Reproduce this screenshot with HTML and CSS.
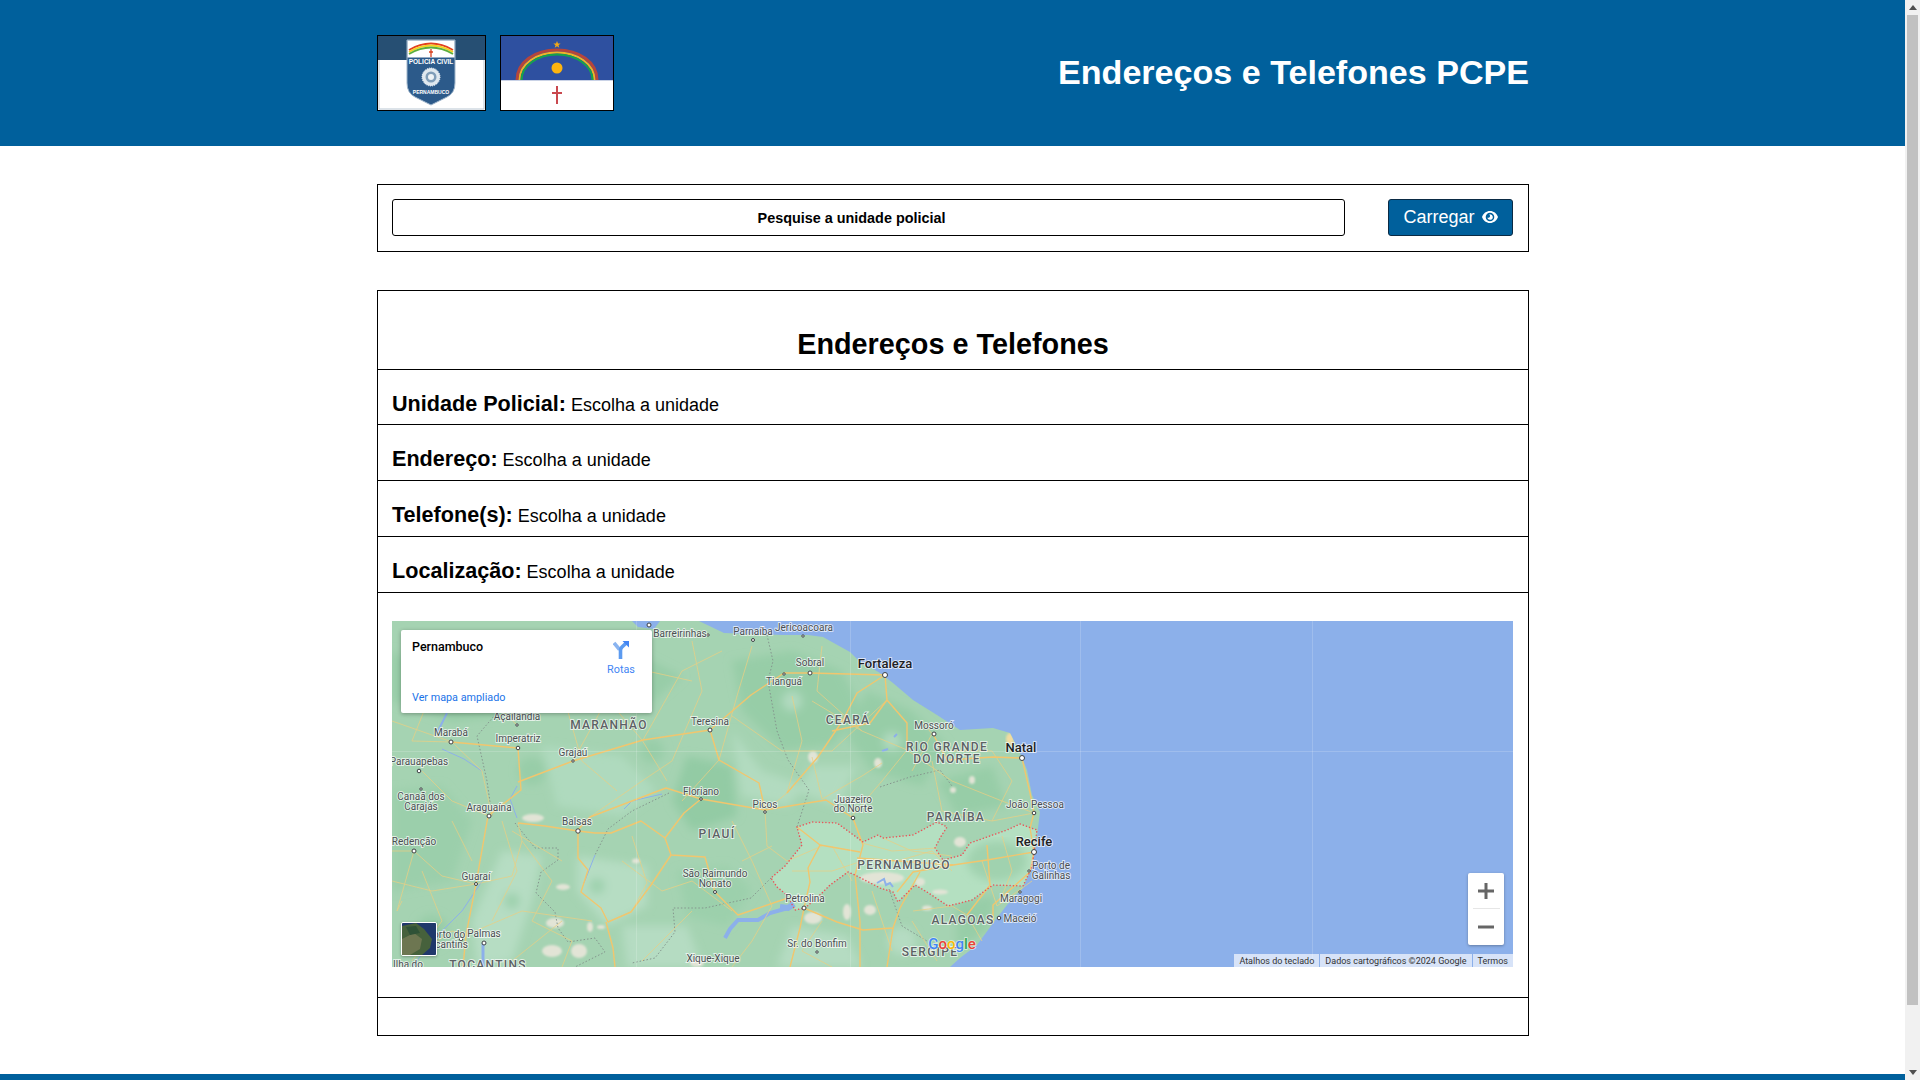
FILE: index.html
```html
<!DOCTYPE html>
<html lang="pt-BR">
<head>
  <meta charset="utf-8">
  <title>Endereços e Telefones PCPE</title>
  <link rel="stylesheet" href="styles.css">
</head>
<body>
<div class="page">
  <div class="content">

    <header class="top">
      <div class="container top-inner">
        <div class="logos">
          <svg class="logo logo-pc" viewBox="0 0 107 74">
            <rect width="107" height="74" fill="#fff"/>
            <rect x="1" y="1" width="105" height="72" fill="none" stroke="#b9c6d2"/>
            <rect width="107" height="24" fill="#264f73"/>
            <path d="M29 4h48v43q0 10-8 14l-16 8-16-8q-8-4-8-14z" fill="#2c5a8a" stroke="#9fb6cb" stroke-width="1"/>
            <path d="M29.500 4.500h47v17h-47z" fill="#fff"/>
            <path d="M31 14q22-13 44 0" fill="none" stroke="#e2411f" stroke-width="1.800"/>
            <path d="M31 16q22-13 44 0" fill="none" stroke="#f4d21f" stroke-width="1.800"/>
            <path d="M31 18q22-13 44 0" fill="none" stroke="#5cae3c" stroke-width="1.800"/>
            <path d="M53 13v8M51 16h4" stroke="#d8401f" stroke-width="1.300"/>
            <text class="logo-t" x="53" y="28">POLICIA CIVIL</text>
            <circle cx="53" cy="41" r="9" fill="#dfe8ef" stroke="#fff" stroke-width="1" stroke-dasharray="1 1"/>
            <circle cx="53" cy="41" r="5.500" fill="#7f9db8"/>
            <circle cx="53" cy="41" r="3" fill="#eef3f6"/>
            <text class="logo-t logo-t-sm" x="53" y="58">PERNAMBUCO</text>
          </svg>
          <svg class="logo logo-pe" viewBox="0 0 112 74">
            <rect width="112" height="74" fill="#fff"/>
            <rect width="112" height="44" fill="#2e50a0"/>
            <rect y="44" width="112" height="1" fill="#c9d2e6"/>
            <path d="M16 44c0-18 18-30 40-30s40 12 40 30" fill="none" stroke="#b5453c" stroke-width="3"/>
            <path d="M18.500 44c0-16 17-27.500 37.500-27.500S93.500 28 93.500 44" fill="none" stroke="#f0b428" stroke-width="2"/>
            <path d="M20.500 44c0-14 16-25.500 35.500-25.500S91.500 30 91.500 44" fill="none" stroke="#16a34a" stroke-width="2"/>
            <circle cx="56" cy="32" r="5.500" fill="#fdb40f"/>
            <path d="M56 5l1 2.600h2.600l-2.100 1.600.8 2.600-2.300-1.600-2.300 1.600.8-2.600-2.100-1.600h2.600z" fill="#f0a818"/>
            <path d="M56 50v18M51 57h10" stroke="#c9484e" stroke-width="2"/>
          </svg>
        </div>
        <h1 class="top-title">Endereços e Telefones PCPE</h1>
      </div>
    </header>

    <main class="container main">
      <form class="card search" onsubmit="return false">
        <input class="search-input" type="text" placeholder="Pesquise a unidade policial">
        <button class="btn" type="button">
          Carregar
          <svg class="btn-eye" viewBox="0 0 16 12">
            <path fill-rule="evenodd" d="M8 0c3.600 0 6.700 2.300 8 6-1.300 3.700-4.400 6-8 6S1.300 9.700 0 6c1.300-3.700 4.400-6 8-6zm0 1.700a4.300 4.300 0 1 0 0 8.600 4.300 4.300 0 0 0 0-8.600z" fill="#fff"/>
            <path d="M8 3.200a2.800 2.800 0 1 1-2.700 3.500c1 .4 2.500-.2 2.700-1.300.1-.8-.2-1.500-.7-2.100.2 0 .5-.1.700-.1z" fill="#fff"/>
          </svg>
        </button>
      </form>

      <section class="card info">
        <h2 class="info-title">Endereços e Telefones</h2>
        <p class="info-row"><b>Unidade Policial:</b> Escolha a unidade</p>
        <p class="info-row"><b>Endereço:</b> Escolha a unidade</p>
        <p class="info-row"><b>Telefone(s):</b> Escolha a unidade</p>
        <p class="info-row"><b>Localização:</b> Escolha a unidade</p>

        <div class="map-row">
          <div class="map">
            <svg class="map-art" viewBox="0 0 1121 346">
              <defs>
                <filter id="soft" x="-10%" y="-10%" width="120%" height="120%"><feGaussianBlur stdDeviation="4"/></filter>
                <filter id="blur1"><feGaussianBlur stdDeviation="1"/></filter>
                <filter id="softer"><feGaussianBlur stdDeviation=".35"/></filter>
                <clipPath id="land-clip"><path d="M0 0H307L332 12 390 14 416 14 431 16 458 31 466 39 488 52 501 62 521 79 545 94 568 109 601 107 618 112 628 132 635 149 640 174 648 191 646 207 645 217 643 231 638 251 631 267 615 284 601 302 585 324 568 337 558 346H0z"/></clipPath>
                <path id="pe-line" d="M405 206L420 201 445 202 471 221 486 214 491 217 521 214 545 201 555 206 548 217 543 227 551 239 570 234 578 222 615 209 628 203 645 209 643 224 640 246 631 265 601 264 580 279 556 285 535 271 523 264 506 281 501 271 488 267 463 254 456 251 438 264 430 272 413 287 403 289 395 274 385 266 379 257 393 245 410 224z"/>
              </defs>
              <rect width="1121" height="346" fill="#8cb0ea"/>

              <!-- terra -->
              <path d="M0 0H307L332 12 390 14 416 14 431 16 458 31 466 39 488 52 501 62 521 79 545 94 568 109 601 107 618 112 628 132 635 149 640 174 648 191 646 207 645 217 643 231 638 251 631 267 615 284 601 302 585 324 568 337 558 346H0z" fill="#a5d3b2"/>

              <g clip-path="url(#land-clip)">
                <g filter="url(#soft)">
                  <path d="M0 30L60 60 120 50 110 95 60 100 0 80z" fill="#96cca6"/>
                  <path d="M140 20L240 30 290 55 250 90 180 70z" fill="#98cda8"/>
                  <path d="M340 40L400 30 450 50 470 90 440 125 390 130 350 90z" fill="#97cda7"/>
                  <path d="M475 70L520 90 555 125 530 165 480 150 455 115z" fill="#97cda7"/>
                  <path d="M0 170L50 165 80 200 60 260 0 270z" fill="#9bcfab"/>
                  <path d="M110 230L150 235 140 280 120 340 85 346 80 300z" fill="#b6ddc3"/>
                  <path d="M150 125L230 135 265 170 230 195 165 185z" fill="#afdabe"/>
                  <path d="M185 235L255 245 255 285 215 305 185 270z" fill="#b6ddc3"/>
                  <path d="M295 135L340 145 345 195 300 210 280 180z" fill="#93cba4"/>
                  <path d="M340 110L370 150 415 165 395 185 350 175z" fill="#b2dbc0"/>
                  <path d="M285 250L335 245 360 270 335 305 295 295z" fill="#9cd0ac"/>
                  <path d="M420 145L465 145 445 185 405 170z" fill="#b2dbc0"/>
                  <path d="M230 305L295 305 310 346H235z" fill="#b5dcc2"/>
                  <path d="M545 160L600 145 615 185 565 195z" fill="#97cda7"/>
                  <path d="M565 280L605 275 595 310 565 328z" fill="#97cda7"/>
                  <path d="M400 305L455 315 470 346H385z" fill="#b5dcc2"/>
                  <circle cx="40" cy="310" r="16" fill="#98cda8"/>
                  <circle cx="260" cy="130" r="12" fill="#98cda8"/>
                  <circle cx="140" cy="150" r="14" fill="#98cda8"/>
                  <circle cx="510" cy="320" r="14" fill="#b5dcc2"/>
                  <circle cx="205" cy="265" r="8" fill="#9ed1ae"/>
                  <circle cx="120" cy="280" r="8" fill="#9ed1ae"/>
                  <circle cx="240" cy="60" r="9" fill="#b1dabf"/>
                  <circle cx="80" cy="60" r="9" fill="#b1dabf"/>
                  <circle cx="400" cy="80" r="10" fill="#b1dabf"/>
                  <circle cx="500" cy="120" r="9" fill="#b1dabf"/>
                </g>

                <!-- Pernambuco -->
                <use href="#pe-line" fill="#b4e0c1" filter="url(#softer)"/>
                <ellipse cx="605" cy="240" rx="30" ry="20" fill="#a0d2af" filter="url(#soft)"/>

                <!-- manchas claras -->
                <g fill="#e2e4d6" filter="url(#blur1)">
                  <ellipse cx="141" cy="197" rx="11" ry="4"/>
                  <ellipse cx="244" cy="240" rx="4" ry="2.500"/>
                  <ellipse cx="171" cy="266" rx="7" ry="3"/>
                  <ellipse cx="163" cy="302" rx="9" ry="5"/>
                  <ellipse cx="198" cy="306" rx="3" ry="5"/>
                  <ellipse cx="209" cy="306" rx="4" ry="2"/>
                  <ellipse cx="160" cy="330" rx="10" ry="6"/>
                  <ellipse cx="187" cy="330" rx="8" ry="7"/>
                  <ellipse cx="421" cy="297" rx="9" ry="6"/>
                  <ellipse cx="478" cy="289" rx="6" ry="5"/>
                  <ellipse cx="455" cy="291" rx="4" ry="8"/>
                  <ellipse cx="568" cy="221" rx="6" ry="5"/>
                  <ellipse cx="548" cy="271" rx="8" ry="2.500"/>
                  <ellipse cx="535" cy="287" rx="5" ry="2.500"/>
                  <ellipse cx="421" cy="136" rx="5" ry="6"/>
                  <ellipse cx="486" cy="142" rx="4" ry="5"/>
                  <ellipse cx="580" cy="159" rx="3" ry="4"/>
                  <ellipse cx="561" cy="169" rx="3" ry="3"/>
                  <ellipse cx="305" cy="342" rx="7" ry="4"/>
                  <ellipse cx="490" cy="257" rx="22" ry="6"/>
                  <ellipse cx="528" cy="261" rx="5" ry="4"/>
                </g>
                <ellipse cx="618" cy="118" rx="4" ry="6" fill="#f1dca0" filter="url(#blur1)"/>
              </g>

              <!-- rios e lagos -->
              <g fill="none" stroke="#8cb0ea" filter="url(#softer)">
                <path d="M333 317L338 308 346 299 366 299 378 292 396 287" stroke-width="4"/>
                <path d="M388 286L396 287 402 283" stroke-width="6"/>
                <path d="M485 262L492 258 494 264 498 262 501 266" stroke-width="2"/>
                <path d="M270 173L240 180 232 188" stroke-width="1"/>
                <path d="M125 197L118 178 125 165M90 260L70 290 40 320 20 346" stroke-width="1"/>
                <path d="M91 322V346" stroke-width="3"/>
                <path d="M203 234L192 262" stroke-width="1"/>
                <path d="M50 128L72 138 90 150" stroke-width="1"/>
                <path d="M490 130L496 128M505 113L502 116" stroke-width="2"/>
                <path d="M55 92L45 112" stroke-width="2"/>
                <path d="M240 0L268 0 262 8 246 6z" fill="#8cb0ea" stroke="none"/>
              </g>

              <!-- divisas estaduais -->
              <g fill="none" stroke="#84958d" stroke-width="1" stroke-dasharray="1.500 2">
                <path d="M123 202L143 227 166 227 166 239 149 251 144 272 163 291 166 307 176 321 203 317 213 331 183 346"/>
                <path d="M379 257L359 277 313 287 281 287 283 311 263 337 240 342"/>
                <path d="M277 172L240 190 216 208 203 234"/>
                <path d="M375 14L381 40 376 60 385 110 396 139 417 169 405 206"/>
                <path d="M488 166L518 156 548 149 560 165"/>
                <path d="M497 268L510 305 535 320"/>
                <path d="M155 10L130 30 115 80 85 115 95 160 100 195"/>
              </g>

              <!-- estradas secundarias -->
              <g fill="none" stroke="#e8cf84" stroke-width=".9" opacity=".85" filter="url(#softer)">
                <path d="M0 100L60 121 90 150 100 195M30 150L60 180 97 195"/>
                <path d="M0 230L22 230 50 255 84 263 120 255 130 220 126 202"/>
                <path d="M22 230L5 290 10 280M84 263L40 270 0 260"/>
                <path d="M74 314L130 290 200 300M120 340L170 300"/>
                <path d="M170 70L190 140 225 170M200 60L250 119"/>
                <path d="M250 119L275 160M251 119L290 50 330 30M125 60L210 40 300 60"/>
                <path d="M340 95L390 130 440 130 495 79M420 80L470 110 515 129"/>
                <path d="M515 129L490 160 460 195 470 222M515 129L560 160 610 180 642 192"/>
                <path d="M420 136L430 178 470 155 490 142M540 140L550 190 600 200 642 192"/>
                <path d="M400 75L410 120 395 172M373 190L395 172"/>
                <path d="M491 217L520 230 560 235M470 222L500 230 545 227"/>
                <path d="M430 225L395 240 375 225 373 190M590 240L605 285 640 260"/>
                <path d="M521 290L560 285 575 294 590 320M480 270L500 330"/>
                <path d="M240 215L255 262 240 290M300 290L250 340"/>
                <path d="M30 330L60 310 74 314M120 210L170 240"/>
                <path d="M10 20L40 70 20 120 60 121M70 20L95 75 125 104M250 20L225 60 181 140"/>
                <path d="M300 20L310 70 280 140 250 160 198 196M360 25L345 75 327 139 290 180"/>
                <path d="M430 25L425 70 470 110M560 130L600 130 620 160 600 200M530 100L540 113 520 150"/>
                <path d="M130 220L160 260 140 300 180 320 170 346M230 240L270 270 300 260 340 290"/>
                <path d="M30 250L50 300 20 340M110 200L125 250 100 300M60 200L80 240"/>
                <path d="M350 240L380 225M340 200L360 240 380 285 360 320 340 346"/>
                <path d="M430 300L410 330 440 346M520 300L545 340M560 250L540 230 505 240"/>
                <path d="M440 225L460 260M400 250L440 250 470 240M610 215L620 250 610 275"/>
              </g>

              <!-- estradas principais -->
              <g fill="none" stroke="#f1c66e" stroke-width="1.400" stroke-linejoin="round" filter="url(#softer)">
                <path d="M126 202L153 205 186 210 203 212 219 212 249 200 273 217 279 234 313 236 323 271 346 294 396 277"/>
                <path d="M279 234L259 264 239 291 216 301 209 287 189 271 196 249 186 237 186 210"/>
                <path d="M214 301L221 327 223 346"/>
                <path d="M96 195L84 263 74 314 71 346"/>
                <path d="M96 195L129 169 126 127 59 121"/>
                <path d="M126 161L181 140 251 119 318 109 359 74 392 52 418 52 493 54"/>
                <path d="M318 109L327 139 367 162 373 189 434 179 461 197"/>
                <path d="M309 178L274 167 198 196 186 209M309 178L292 192 273 217M309 178L373 189"/>
                <path d="M493 54L495 79 478 102 440 110M493 54L465 72 451 99 426 136 395 172"/>
                <path d="M495 79L515 102 515 129M541 113L555 139 601 136 630 137"/>
                <path d="M630 137L638 172 642 192 638 207 642 231"/>
                <path d="M642 231L595 239 561 244 521 251 505 271"/>
                <path d="M465 237L561 244M428 224L468 231M428 224L405 206M428 224L416 247 418 261 412 287"/>
                <path d="M461 197L471 224 463 254"/>
                <path d="M412 287L408 307 398 346M412 287L445 301 471 309 501 307 508 287 528 251"/>
                <path d="M463 254L468 301 468 346M501 307L495 346"/>
                <path d="M642 231L638 251 601 284 601 302M595 224L598 264 575 294"/>
              </g>

              <!-- linhas de grade -->
              <g stroke="#fff" stroke-opacity=".17" stroke-width="1">
                <path d="M458.500 0V346M688.500 0V346M920.500 0V346M0 130.500H1121M244.500 0V346"/>
              </g>

              <use href="#pe-line" fill="none" stroke="#e8565a" stroke-width="1.500" stroke-dasharray=".1 3.200" stroke-linecap="round"/>

              <!-- pontos -->
              <g class="dots">
                <circle cx="257" cy="4" r="2"/>
                <circle cx="493" cy="54" r="2.500"/>
                <circle cx="418" cy="52" r="2"/>
                <circle cx="392" cy="53" r="1.200"/>
                <circle cx="411" cy="15" r="1.200"/>
                <circle cx="361" cy="19" r="1.500"/>
                <circle cx="316" cy="14" r="1.200"/>
                <circle cx="542" cy="113" r="2"/>
                <circle cx="630" cy="137" r="2.500"/>
                <circle cx="642" cy="192" r="1.800"/>
                <circle cx="642" cy="231" r="2.500"/>
                <circle cx="637" cy="250" r="1.200"/>
                <circle cx="628" cy="271" r="1.200"/>
                <circle cx="607" cy="297" r="1.800"/>
                <circle cx="425" cy="331" r="1.200"/>
                <circle cx="461" cy="197" r="1.800"/>
                <circle cx="412" cy="287" r="2"/>
                <circle cx="373" cy="191" r="1.300"/>
                <circle cx="309" cy="178" r="1.300"/>
                <circle cx="323" cy="271" r="1.500"/>
                <circle cx="186" cy="210" r="2.200"/>
                <circle cx="318" cy="109" r="2"/>
                <circle cx="181" cy="140" r="1.200"/>
                <circle cx="125" cy="104" r="1.200"/>
                <circle cx="126" cy="127" r="1.800"/>
                <circle cx="59" cy="121" r="2"/>
                <circle cx="27" cy="150" r="1.800"/>
                <circle cx="29" cy="168" r="1.200"/>
                <circle cx="97" cy="195" r="2"/>
                <circle cx="22" cy="230" r="2"/>
                <circle cx="84" cy="263" r="1.500"/>
                <circle cx="92" cy="322" r="2"/>
                <circle cx="69" cy="318" r="1.800"/>
              </g>

              <!-- nomes -->
              <g class="lb">
                <text x="412" y="10">Jericoacoara</text>
                <text x="361" y="14">Parnaíba</text>
                <text x="288" y="16">Barreirinhas</text>
                <text x="418" y="45">Sobral</text>
                <text x="392" y="64">Tianguá</text>
                <text x="542" y="108">Mossoró</text>
                <text x="643" y="187">João Pessoa</text>
                <text x="659" y="248">Porto de</text>
                <text x="659" y="258">Galinhas</text>
                <text x="629" y="281">Maragogi</text>
                <text x="628" y="301">Maceió</text>
                <text x="425" y="326">Sr. do Bonfim</text>
                <text x="461" y="182">Juazeiro</text>
                <text x="461" y="191">do Norte</text>
                <text x="413" y="281">Petrolina</text>
                <text x="373" y="187">Picos</text>
                <text x="309" y="174">Floriano</text>
                <text x="323" y="256">São Raimundo</text>
                <text x="323" y="266">Nonato</text>
                <text x="321" y="341">Xique-Xique</text>
                <text x="185" y="204">Balsas</text>
                <text x="318" y="104">Teresina</text>
                <text x="181" y="135">Grajaú</text>
                <text x="125" y="99">Açailândia</text>
                <text x="126" y="121">Imperatriz</text>
                <text x="59" y="115">Marabá</text>
                <text x="27" y="144">Parauapebas</text>
                <text x="29" y="179">Canaã dos</text>
                <text x="29" y="189">Carajás</text>
                <text x="97" y="190">Araguaína</text>
                <text x="22" y="224">Redenção</text>
                <text x="84" y="259">Guaraí</text>
                <text x="92" y="316">Palmas</text>
                <text x="54" y="317">Porto do</text>
                <text x="54" y="327">Tocantins</text>
                <text x="16" y="347">Ilha do</text>
              </g>
              <g class="lb lb-city">
                <text x="493" y="47">Fortaleza</text>
                <text x="629" y="131">Natal</text>
                <text x="642" y="225">Recife</text>
              </g>
              <g class="lb lb-state">
                <text x="456" y="103">CEARÁ</text>
                <text x="555" y="130">RIO GRANDE</text>
                <text x="555" y="142">DO NORTE</text>
                <text x="564" y="200">PARAÍBA</text>
                <text x="571" y="303">ALAGOAS</text>
                <text x="538" y="335">SERGIPE</text>
                <text x="512" y="248">PERNAMBUCO</text>
                <text x="325" y="217">PIAUÍ</text>
                <text x="217" y="108">MARANHÃO</text>
                <text x="96" y="348">TOCANTINS</text>
              </g>
              <text class="gg" x="560" y="328"><tspan fill="#4285f4">G</tspan><tspan fill="#ea4335">o</tspan><tspan fill="#fbbc05">o</tspan><tspan fill="#4285f4">g</tspan><tspan fill="#34a853">l</tspan><tspan fill="#ea4335">e</tspan></text>
            </svg>

            <div class="map-card">
              <div class="map-card-top">
                <span class="map-card-name">Pernambuco</span>
                <a class="map-routes" href="#">
                  <svg class="map-routes-ico" viewBox="0 0 16 18">
                    <path d="M1 2l5.500 6.500" fill="none" stroke="#8ab4f0" stroke-width="3.600"/>
                    <path d="M7.500 18V9.500Q7.500 7.500 9 6l4-3.800" fill="none" stroke="#5c9bf0" stroke-width="3.600"/>
                    <path d="M9.500 0H16v6.500z" fill="#4285f4"/>
                  </svg>
                  Rotas
                </a>
              </div>
              <a class="map-link" href="#">Ver mapa ampliado</a>
            </div>

            <div class="map-thumb">
              <svg viewBox="0 0 34 32">
                <rect width="34" height="32" fill="#20386b"/>
                <path d="M0 3L14 0 22 6 30 16 28 25 20 32H0z" fill="#46613c"/>
                <path d="M0 16L12 10 20 16 18 26 8 32H0z" fill="#6d7651"/>
                <path d="M4 4L14 3 18 10 8 12z" fill="#2f5237"/>
              </svg>
            </div>

            <div class="map-zoom">
              <button class="map-zoom-btn" type="button">
                <svg viewBox="0 0 16 16"><path d="M6.500 0h3v6.500H16v3H9.500V16h-3V9.500H0v-3h6.500z" fill="#666"/></svg>
              </button>
              <span class="map-zoom-sep"></span>
              <button class="map-zoom-btn" type="button">
                <svg viewBox="0 0 16 16"><path d="M0 6.500h16v3H0z" fill="#666"/></svg>
              </button>
            </div>

            <div class="map-attr">
              <span>Atalhos do teclado</span>
              <span>Dados cartográficos ©2024 Google</span>
              <span>Termos</span>
            </div>
          </div>
        </div>

        <div class="info-foot"></div>
      </section>
    </main>

    <footer class="bottom"></footer>
  </div>

  <div class="scrollbar">
    <span class="scroll-arrow scroll-up"></span>
    <span class="scroll-thumb"></span>
    <span class="scroll-arrow scroll-down"></span>
  </div>
</div>
</body>
</html>
```

FILE: styles.css
```css
* {
  box-sizing: border-box;
}
body {
  margin: 0;
  font-family: "Liberation Sans", Arial, sans-serif;
  color: #000;
  background-color: #fff;
}
.page {
  display: flex;
  height: 100vh;
  overflow: hidden;
}
.content {
  flex: 1;
  min-width: 0;
}
.container {
  width: 1152px;
  margin: 0 376px 0 377px;
}

/* Topo */
.top {
  height: 146px;
  background-color: #00609c;
}
.top-inner {
  display: flex;
  align-items: center;
  justify-content: space-between;
  height: 100%;
}
.logos {
  display: flex;
  gap: 14px;
}
.logo {
  display: block;
  height: 76px;
  border: 1.5px solid #000;
}
.logo-pc {
  width: 109px;
}
.logo-pe {
  width: 114px;
}
.logo-t {
  font-family: "Liberation Sans", sans-serif;
  font-size: 6.500px;
  font-weight: 700;
  fill: #fff;
  text-anchor: middle;
}
.logo-t-sm {
  font-size: 5px;
}
.top-title {
  margin: 0 0 2px;
  font-size: 34.100px;
  color: #fff;
}

/* Conteudo */
.main {
  display: flex;
  flex-direction: column;
  gap: 38px;
  padding: 38px 0;
}
.card {
  border: 1px solid #000;
}
.search {
  display: flex;
  align-items: flex-start;
  justify-content: space-between;
  height: 68px;
  padding: 14px 15px 0 14px;
}
.search-input {
  width: 953px;
  height: 37px;
  padding: 0 34px 0 0;
  border: 1px solid #000;
  border-radius: 3px;
  font-family: inherit;
  font-size: 14.400px;
  font-weight: 700;
  text-align: center;
  background-color: #fff;
}
.search-input::placeholder {
  color: #000;
  opacity: 1;
}
.btn {
  display: flex;
  align-items: center;
  justify-content: center;
  gap: 7px;
  width: 125px;
  height: 37px;
  padding: 0;
  border: 1px solid #0a2a44;
  border-radius: 3px;
  background-color: #00609c;
  color: #fff;
  font-family: inherit;
  font-size: 18px;
}
.btn-eye {
  width: 16px;
  height: 12px;
  margin-bottom: 2px;
}
.info-title {
  height: 79px;
  margin: 0;
  padding-top: 37px;
  border-bottom: 1px solid #000;
  font-size: 28.800px;
  line-height: 33px;
  text-align: center;
}
.info-row {
  height: 56px;
  margin: 0;
  padding: 21px 14px 0;
  border-bottom: 1px solid #000;
  font-size: 18px;
  line-height: 26px;
}
.info-title + .info-row {
  height: 55px;
}
.info-row b {
  font-size: 21.600px;
}
.map-row {
  padding: 28px 15px 30px 14px;
  border-bottom: 1px solid #000;
}
.info-foot {
  height: 37px;
}

/* Mapa */
.map {
  position: relative;
  height: 346px;
  overflow: hidden;
  font-family: Roboto, "Liberation Sans", sans-serif;
}
.map-art {
  display: block;
  width: 100%;
  height: 100%;
}
.dots circle {
  fill: #fff;
  stroke: #3c4043;
  stroke-width: 1;
}
.lb text {
  font-family: Roboto, sans-serif;
  font-size: 10px;
  fill: #4a4f52;
  text-anchor: middle;
  stroke: #fff;
  stroke-opacity: .7;
  stroke-width: 1.800px;
  paint-order: stroke;
}
.lb-city text {
  font-size: 13px;
  font-weight: 500;
  fill: #202124;
}
.lb-state text {
  font-size: 12px;
  font-weight: 500;
  letter-spacing: 1.300px;
  fill: #5c6164;
}
.gg {
  font-family: Roboto, sans-serif;
  font-size: 15px;
  font-weight: 500;
  text-anchor: middle;
  stroke: #fff;
  stroke-opacity: .6;
  stroke-width: 1.500px;
  paint-order: stroke;
}
.map-card {
  position: absolute;
  top: 9px;
  left: 9px;
  width: 251px;
  height: 83px;
  padding: 9px 11px;
  background-color: #fff;
  border-radius: 2px;
  box-shadow: 0 1px 4px rgba(0, 0, 0, .3);
}
.map-card-top {
  display: flex;
  justify-content: space-between;
  height: 47px;
}
.map-card-name {
  font-size: 12.500px;
  font-weight: 500;
  line-height: 16px;
}
.map-routes {
  display: flex;
  flex-direction: column;
  align-items: center;
  gap: 4px;
  width: 34px;
  margin-right: 3px;
  padding-top: 2px;
  color: #4285f4;
  font-size: 10.800px;
  text-decoration: none;
}
.map-routes-ico {
  flex: none;
  width: 16px;
  height: 18px;
}
.map-link {
  color: #1a73e8;
  font-size: 10.800px;
  text-decoration: none;
}
.map-thumb {
  position: absolute;
  top: 301px;
  left: 9px;
  width: 36px;
  height: 34px;
  border: 1px solid #fff;
  border-radius: 2px;
  box-shadow: 0 1px 3px rgba(0, 0, 0, .3);
  overflow: hidden;
}
.map-thumb svg {
  display: block;
  width: 100%;
  height: 100%;
}
.map-zoom {
  position: absolute;
  top: 252px;
  right: 9px;
  display: flex;
  flex-direction: column;
  align-items: center;
  width: 36px;
  height: 72px;
  background-color: #fff;
  border-radius: 2px;
  box-shadow: 0 1px 3px rgba(0, 0, 0, .3);
}
.map-zoom-btn {
  display: flex;
  align-items: center;
  justify-content: center;
  width: 36px;
  height: 35px;
  padding: 0;
  border: 0;
  background: none;
}
.map-zoom-btn svg {
  width: 16px;
  height: 16px;
}
.map-zoom-sep {
  width: 27px;
  height: 1px;
  background-color: #e6e6e6;
}
.map-attr {
  position: absolute;
  right: 0;
  bottom: 0;
  display: flex;
  gap: 1px;
  height: 13px;
  font-size: 9px;
  line-height: 14px;
  color: #333;
}
.map-attr span {
  padding: 0 5px;
  background-color: rgba(255, 255, 255, .65);
}

/* Rodape e barra de rolagem */
.bottom {
  height: 40px;
  background-color: #00609c;
}
.scrollbar {
  display: flex;
  flex-direction: column;
  align-items: center;
  width: 15px;
  background-color: #f1f1f1;
}
.scroll-arrow {
  flex: none;
  width: 0;
  height: 0;
  border-left: 4px solid transparent;
  border-right: 4px solid transparent;
}
.scroll-up {
  margin: 5px 0 5px;
  border-bottom: 5px solid #505050;
}
.scroll-thumb {
  width: 11px;
  height: 990px;
  background-color: #c1c1c1;
}
.scroll-down {
  margin-top: auto;
  margin-bottom: 5px;
  border-top: 5px solid #505050;
}
```
